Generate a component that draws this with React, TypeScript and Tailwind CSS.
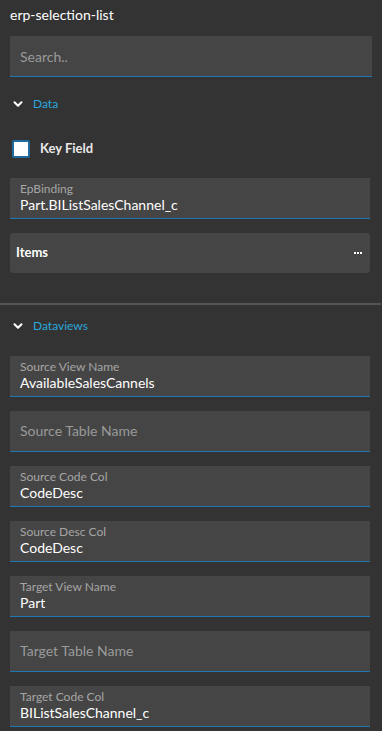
import { ChevronDown } from "lucide-react";

type FieldProps = { label: string; value?: string };

// text field with floating label, or placeholder when empty
function Field({ label, value }: FieldProps) {
  if (!value) {
    return (
      <div className="h-[41px] bg-[#454545] border-b border-[#1f78b4] flex items-center px-[10px]">
        <span className="text-[14px] text-[#9a9a9a]">{label}</span>
      </div>
    );
  }
  return (
    <div className="h-[41px] bg-[#454545] border-b border-[#1f78b4] flex flex-col justify-center px-[10px]">
      <span className="text-[12px] leading-[15px] text-[#a5a5a5]">{label}</span>
      <span className="text-[14px] leading-[18px] text-white">{value}</span>
    </div>
  );
}

function SectionHeader({ title }: { title: string }) {
  return (
    <div className="flex items-center gap-[8px] pl-[1px]">
      <ChevronDown size={14} strokeWidth={3.5} className="text-white" />
      <span className="text-[12px] text-[#2aa7dd]">{title}</span>
    </div>
  );
}

export default function App() {
  const dataviews: FieldProps[] = [
    { label: "Source View Name", value: "AvailableSalesCannels" },
    { label: "Source Table Name" },
    { label: "Source Code Col", value: "CodeDesc" },
    { label: "Source Desc Col", value: "CodeDesc" },
    { label: "Target View Name", value: "Part" },
    { label: "Target Table Name" },
    { label: "Target Code Col", value: "BIListSalesChannel_c" },
  ];

  return (
    <div className="w-[382px] h-[731px] overflow-hidden bg-[#333333] font-['Lato',sans-serif]">
      <div className="px-[10px] pt-[6px]">
        <div className="text-[14px] leading-[18px] text-white">erp-selection-list</div>
        <div className="mt-[12px] h-[41px] bg-[#454545] border-b border-[#1f78b4] flex items-center px-[10px]">
          <span className="text-[14px] text-[#9a9a9a]">Search..</span>
        </div>
      </div>

      <div className="pr-[12px] pl-[10px]">
        <div className="mt-[18px]">
          <SectionHeader title="Data" />
        </div>

        <div className="mt-[26px] flex items-center gap-[10px] pl-[2px]">
          <div className="w-[18px] h-[18px] bg-white border-[2px] border-[#1f6b9f] rounded-[2px]" />
          <span className="text-[13px] font-bold text-[#e8e8e8]">Key Field</span>
        </div>

        <div className="mt-[19px]">
          <Field label="EpBinding" value="Part.BIListSalesChannel_c" />
        </div>

        <div className="mt-[14px] h-[40px] bg-[#454545] rounded-[3px] flex items-center justify-between pl-[6px] pr-[8px]">
          <span className="text-[13px] font-bold text-white">Items</span>
          <div className="flex gap-[1px]">
            <span className="w-[2px] h-[2px] bg-white" />
            <span className="w-[2px] h-[2px] bg-white" />
            <span className="w-[2px] h-[2px] bg-white" />
          </div>
        </div>
      </div>

      <div className="mt-[30px] h-[2px] bg-[#555555] mr-[1px]" />

      <div className="pr-[12px] pl-[10px]">
        <div className="mt-[12px]">
          <SectionHeader title="Dataviews" />
        </div>
        <div className="mt-[21px] flex flex-col gap-[14px]">
          {dataviews.map((f) => (
            <Field key={f.label} label={f.label} value={f.value} />
          ))}
        </div>
      </div>
    </div>
  );
}
